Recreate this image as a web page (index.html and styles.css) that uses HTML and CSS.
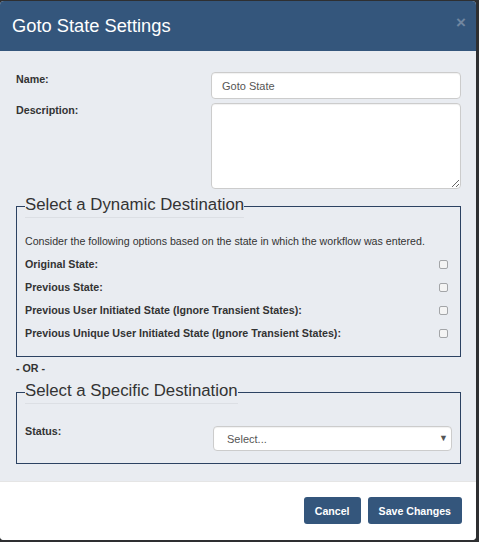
FILE: index.html
```html
<!DOCTYPE html>
<html lang="en">
<head>
<meta charset="utf-8">
<title>Goto State Settings</title>
<link rel="stylesheet" href="styles.css">
</head>
<body>
<div class="modal">
  <div class="modal-header">
    <h4 class="modal-title">Goto State Settings</h4>
    <button class="close" type="button" aria-label="Close">&times;</button>
  </div>
  <div class="modal-body">
    <div class="form-grid">
      <label class="lbl" for="name">Name:</label>
      <input class="text-input" id="name" type="text" value="Goto State">
      <label class="lbl" for="desc">Description:</label>
      <textarea class="text-area" id="desc"></textarea>
    </div>

    <fieldset class="group">
      <legend class="group-legend">Select a Dynamic Destination</legend>
      <div class="options">
        <p class="hint">Consider the following options based on the state in which the workflow was entered.</p>
        <label class="option"><span>Original State:</span><input class="check" type="checkbox"></label>
        <label class="option"><span>Previous State:</span><input class="check" type="checkbox"></label>
        <label class="option"><span>Previous User Initiated State (Ignore Transient States):</span><input class="check" type="checkbox"></label>
        <label class="option"><span>Previous Unique User Initiated State (Ignore Transient States):</span><input class="check" type="checkbox"></label>
      </div>
    </fieldset>

    <div class="or">- OR -</div>

    <fieldset class="group">
      <legend class="group-legend">Select a Specific Destination</legend>
      <div class="status-row">
        <label class="lbl" for="status">Status:</label>
        <div class="select-wrap">
          <select class="select" id="status">
            <option>Select...</option>
          </select>
          <span class="caret">&#9660;</span>
        </div>
      </div>
    </fieldset>
  </div>
  <div class="modal-footer">
    <button class="btn" type="button">Cancel</button>
    <button class="btn" type="button">Save Changes</button>
  </div>
</div>
</body>
</html>
```

FILE: styles.css
```css
html, body {
  margin: 0;
  padding: 0;
}
body {
  background: #2e2f31;
  font-family: "Liberation Sans", Arial, sans-serif;
  color: #333;
  width: 479px;
  height: 542px;
  overflow: hidden;
}
.modal {
  margin-top: 1px;
  width: 476px;
  height: 539px;
  border-radius: 4px;
  overflow: hidden;
  background: #e9ecf1;
  display: flex;
  flex-direction: column;
}
.modal-header {
  background: #34567c;
  height: 50px;
  box-sizing: border-box;
  padding: 15px 10px 0 12px;
  display: flex;
  align-items: flex-start;
}
.modal-title {
  margin: 0;
  font-size: 18.3px;
  font-weight: normal;
  line-height: 20px;
  color: #fff;
}
.close {
  margin-left: auto;
  margin-top: -3px;
  padding: 0;
  border: 0;
  background: none;
  font-family: "Liberation Sans", Arial, sans-serif;
  font-size: 17px;
  font-weight: bold;
  line-height: 20px;
  color: #7186a0;
}
.modal-body {
  padding: 21px 15px 17px 16px;
  flex: 1;
}
.form-grid {
  display: grid;
  grid-template-columns: 195px 1fr;
  row-gap: 4px;
}
.lbl {
  font-size: 10.7px;
  font-weight: bold;
  line-height: 15px;
}
.text-input, .text-area, .select {
  box-sizing: border-box;
  border: 1px solid #ccc;
  border-radius: 4px;
  background: #fff;
  font-family: "Liberation Sans", Arial, sans-serif;
  font-size: 11px;
  color: #555;
  box-shadow: inset 0 1px 1px rgba(0,0,0,0.06);
  margin: 0;
}
.text-input {
  height: 27px;
  padding: 0 10px;
  width: 100%;
}
.text-area {
  height: 86px;
  width: 100%;
  resize: vertical;
  padding: 4px 10px;
  display: block;
}
.group {
  margin: 6px 0 0 0;
  border: 1px solid #2c4262;
  padding: 0 8px;
  min-width: 0;
}
.group-legend {
  font-size: 16.8px;
  line-height: 20px;
  padding: 0 0 2px 0;
  border-bottom: 1px solid #dcdfe4;
  color: #333;
  margin: 0;
}
.options {
  display: flex;
  flex-direction: column;
  gap: 8px;
  padding: 16px 0 15px 0;
}
.hint {
  margin: 0;
  font-size: 10.65px;
  line-height: 15px;
}
.option {
  display: flex;
  align-items: center;
  justify-content: space-between;
  font-size: 10.7px;
  font-weight: bold;
  line-height: 15px;
}
.check {
  appearance: none;
  -webkit-appearance: none;
  margin: 0 4px 0 0;
  width: 9px;
  height: 9px;
  box-sizing: border-box;
  border: 1px solid #a3a5a8;
  border-radius: 2px;
  background: #f4f4f4;
}
.or {
  margin: 4px 0 5px 0;
  font-size: 10.7px;
  font-weight: bold;
  line-height: 15px;
}
.or + .group {
  margin-top: 0;
}
.status-row {
  display: grid;
  grid-template-columns: 188px 1fr;
  align-items: start;
  padding: 20px 0 12px 0;
}
.select-wrap {
  position: relative;
  margin-top: 2px;
}
.select {
  appearance: none;
  -webkit-appearance: none;
  width: 100%;
  height: 25px;
  padding: 0 13px;
  display: block;
}
.caret {
  position: absolute;
  right: 4px;
  top: 8px;
  font-size: 9px;
  line-height: 9px;
  color: #555;
  pointer-events: none;
}
.modal-footer {
  background: #fff;
  border-top: 1px solid #e5e5e5;
  padding: 15px 14px 16px 0;
  display: flex;
  justify-content: flex-end;
  gap: 7px;
}
.btn {
  height: 27px;
  padding: 0 11px;
  border: 0;
  border-radius: 3px;
  background: #34567c;
  color: #fff;
  font-family: "Liberation Sans", Arial, sans-serif;
  font-size: 10.6px;
  font-weight: bold;
}
```
